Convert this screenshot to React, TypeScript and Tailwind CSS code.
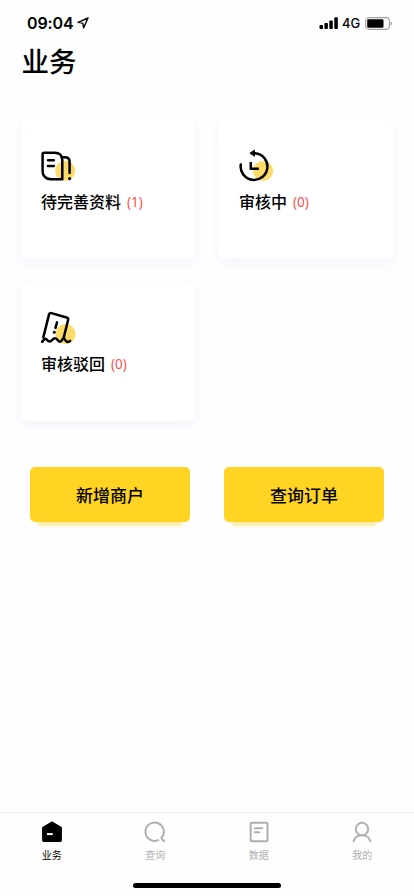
import { useState, type ReactNode } from "react";
import clsx from "clsx";

interface CardProps {
  icon: ReactNode;
  label: string;
  count: number;
}

function PendingIcon() {
  return (
    <svg width="38" height="38" viewBox="0 0 38 38" fill="none" stroke="#000" strokeWidth="2.5" strokeLinecap="round" strokeLinejoin="round">
      <circle cx="24.2" cy="23.8" r="10" fill="#ffdb69" stroke="none" />
      <path d="M3.2 5.7H13.8C18.5 5.7 21.3 8.7 21.3 13V32.2H9.7C5 32.2 1.6 29 1.6 24.4V7.3C1.6 6.4 2.3 5.7 3.2 5.7Z" />
      <path d="M20.6 10.3H23.8C26.9 10.3 28.6 12.1 28.6 14.9V26" />
      <path d="M7 13.2H12.8M7 19H12.8" />
      <circle cx="28.6" cy="31.6" r="1.6" fill="#000" stroke="none" />
    </svg>
  );
}

function ReviewIcon() {
  return (
    <svg width="38" height="38" viewBox="0 0 38 38" fill="none" stroke="#000" strokeWidth="2.5" strokeLinecap="round">
      <circle cx="24.1" cy="23.9" r="10" fill="#ffdb69" stroke="none" />
      <path d="M1.8 17.4A13.4 13.4 0 1 0 16 6.2" />
      <path d="M11.2 6L15.4 3.2V8.8Z" fill="#000" strokeWidth="1" strokeLinejoin="round" />
      <path d="M11.8 16.2V21.7H18.6" strokeLinecap="square" />
    </svg>
  );
}

function RejectIcon() {
  return (
    <svg width="38" height="38" viewBox="0 0 38 38" fill="none" stroke="#000" strokeWidth="2.5" strokeLinecap="round" strokeLinejoin="round">
      <circle cx="24.6" cy="25" r="10" fill="#ffdb69" stroke="none" />
      <path d="M2.3 28.4L8 5.6C8.3 4.4 9.2 3.8 10.4 4.1L25.6 8.5C26.9 8.9 27.4 9.8 27.1 11L22.7 28.6" />
      <path d="M1.2 32.8C2.4 31 3.3 29.7 4.4 29.7C5.8 29.7 6.5 32.6 8.7 32.6C11 32.6 11.6 29.2 14 29.2C16.4 29.2 16.8 32.7 19 32.7C21 32.7 21.4 29.2 22.7 29.2C24 29.2 24.2 32.7 26.2 32.9C27.4 33 28.2 32.5 29 31.9" />
      <path d="M16 13.4L14.5 18.9" />
      <circle cx="13.3" cy="23.3" r="1.5" fill="#000" stroke="none" />
    </svg>
  );
}

function StatusBar() {
  return (
    <div className="flex h-[46px] items-center justify-between pl-[27px] pr-[21px] font-['Inter',sans-serif]">
      <div className="flex items-center gap-[3px]">
        <span className="text-[16px] font-semibold leading-none tracking-[-0.1px]">09:04</span>
        <svg width="12" height="12" viewBox="0 0 12 12" fill="none" stroke="#000" strokeWidth="1.4" strokeLinejoin="round">
          <path d="M11 1L1 5.4L5.7 6.1L6.7 10.8Z" />
        </svg>
      </div>
      <div className="flex items-center">
        <svg width="20" height="12" viewBox="0 0 20 12">
          <rect x="0.5" y="8" width="3.5" height="4" rx="0.8" />
          <rect x="5.4" y="6" width="3.5" height="6" rx="0.8" />
          <rect x="10.3" y="3.5" width="3.5" height="8.5" rx="0.8" />
          <rect x="15.3" y="0.3" width="3.5" height="11.7" rx="0.8" />
        </svg>
        <span className="ml-[3px] w-[23px] text-[13px] font-medium leading-none">4G</span>
        <svg width="28" height="13" viewBox="0 0 28 13">
          <rect x="0.6" y="0.6" width="23.8" height="11.8" rx="3.4" fill="none" stroke="#a3a3a3" strokeWidth="1.1" />
          <rect x="2.2" y="2.2" width="16.3" height="8.6" rx="1.4" />
          <path d="M25.6 4.5C27 5 27 8 25.6 8.5Z" fill="#777" />
        </svg>
      </div>
    </div>
  );
}

function Card({ icon, label, count }: CardProps) {
  return (
    <div className="h-[139px] rounded-[6px] bg-white pl-5 pt-[27px] shadow-[0_4px_12px_rgba(80,90,240,0.065)]">
      {icon}
      <div className="mt-[2px] flex h-7 items-center">
        <span className="text-[16px] font-medium leading-none">{label}</span>
        <span className="ml-[6px] pt-[3px] font-['Noto_Sans',sans-serif] text-[13.5px] leading-none text-[#fa5151]">({count})</span>
      </div>
    </div>
  );
}

const cards: CardProps[] = [
  { icon: <PendingIcon />, label: "待完善资料", count: 1 },
  { icon: <ReviewIcon />, label: "审核中", count: 0 },
  { icon: <RejectIcon />, label: "审核驳回", count: 0 },
];

const tabs = [
  {
    label: "业务",
    icon: (
      <>
        <path d="M12 2.2L21.2 7.6V20.2C21.2 20.9 20.7 21.4 20 21.4H4C3.3 21.4 2.8 20.9 2.8 20.2V7.6Z" fill="currentColor" strokeWidth="1.4" />
        <path d="M7 14.1H12.8" stroke="#fff" strokeWidth="2" strokeLinecap="butt" />
      </>
    ),
  },
  {
    label: "查询",
    icon: (
      <>
        <path d="M15.3 20.2A9.2 9.2 0 1 1 19.6 16.4C18.2 17.2 18.2 18.3 19.2 19.3L21.2 21.3" />
      </>
    ),
  },
  {
    label: "数据",
    icon: (
      <>
        <rect x="3.7" y="2.8" width="16.8" height="18.4" rx="0.8" />
        <path d="M7.8 8.3H15.2M7.8 12.2H12.2" />
      </>
    ),
  },
  {
    label: "我的",
    icon: (
      <>
        <circle cx="12" cy="9" r="6.2" />
        <path d="M3.6 21.4C4.6 17.8 7.5 15.2 12 15.2C16.5 15.2 19.4 17.8 20.4 21.4" />
      </>
    ),
  },
];

export default function App() {
  const [activeTab, setActiveTab] = useState(0);

  return (
    <div className="flex h-[896px] w-[414px] flex-col overflow-hidden bg-[#fefefe] font-['Noto_Sans_CJK_SC',sans-serif] text-black">
      <StatusBar />
      <h1 className="-mt-[2px] pl-[21.5px] text-[27.5px] font-medium leading-[32px]">业务</h1>

      <main className="flex-1 pt-[44px]">
        <div className="grid grid-cols-2 gap-x-6 gap-y-[23px] px-[21px]">
          {cards.map((card) => (
            <Card key={card.label} {...card} />
          ))}
        </div>
        <div className="mt-[46px] grid grid-cols-2 gap-x-[34px] px-[30px]">
          {["新增商户", "查询订单"].map((text) => (
            <button
              key={text}
              className="h-[55px] rounded-[5px] bg-[#ffd422] text-[17px] font-medium shadow-[0_12px_3px_-8px_rgba(255,212,34,0.4)]"
            >
              {text}
            </button>
          ))}
        </div>
      </main>

      <nav className="h-[84px] border-t border-[#eeeeee]">
        <div className="grid grid-cols-4">
          {tabs.map((tab, i) => (
            <button
              key={tab.label}
              onClick={() => setActiveTab(i)}
              className={clsx(
                "flex flex-col items-center pt-[7px]",
                activeTab === i ? "text-black" : "text-[#b0b0b0]"
              )}
            >
              <svg width="24" height="24" viewBox="0 0 24 24" fill="none" stroke="currentColor" strokeWidth="2" strokeLinecap="round" strokeLinejoin="round">
                {tab.icon}
              </svg>
              <span className="mt-[4px] text-[10px] leading-[14px]">{tab.label}</span>
            </button>
          ))}
        </div>
        <div className="mx-auto mt-[20.5px] h-[5px] w-[148px] rounded-full bg-black" />
      </nav>
    </div>
  );
}
